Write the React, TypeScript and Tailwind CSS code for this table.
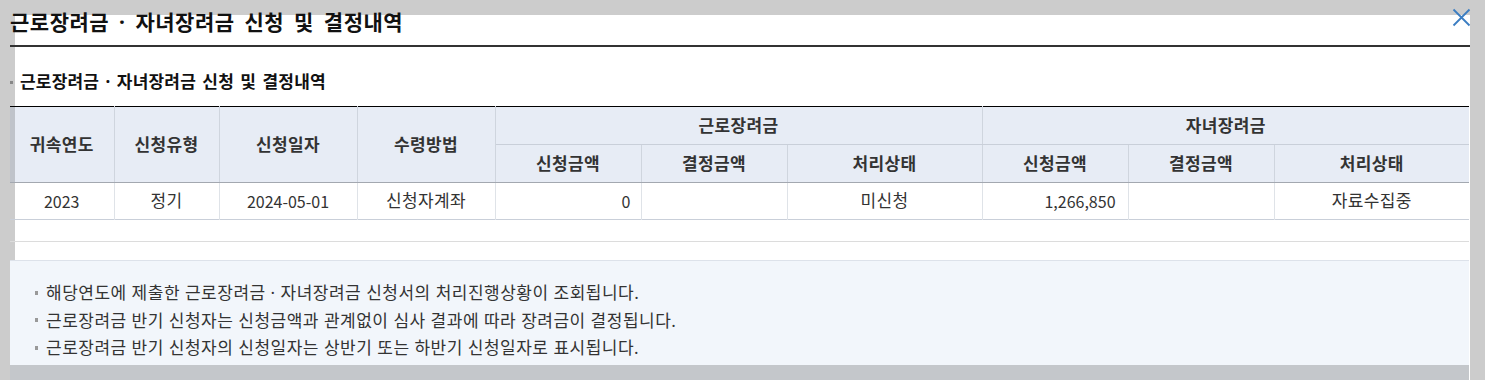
import React from 'react';

const groupCols = ['신청금액', '결정금액', '처리상태'];

// numbers sit a touch narrower than the hangul text in the reference
const num = "font-['Noto_Sans_CJK_KR',sans-serif] text-[16px] tracking-normal";

export default function App() {
  return (
    <div className="relative w-[1485px] h-[380px] overflow-hidden bg-[#cccccc] font-['Noto_Sans','Noto_Sans_CJK_KR',sans-serif] text-[#333]">
      <div className="ml-[10px] w-[1460px] flex flex-col bg-[linear-gradient(to_right,#cccccc_5px,#ffffff_5px)]">
        {/* Title */}
        <div className="h-[47px] border-b-2 border-[#333] bg-[linear-gradient(#cccccc_15px,transparent_15px)]">
          <h1 className="pt-[11px] text-[21px] leading-[22px] font-bold text-[#111] tracking-[0.5px] [word-spacing:4px]">
            근로장려금 · 자녀장려금 신청 및 결정내역
          </h1>
        </div>

        {/* Sub title */}
        <div className="mt-[27px] flex items-center h-[16px]">
          <span className="w-[3px] h-[3px] bg-[#888]" />
          <h2 className="ml-[7px] text-[17px] leading-[16px] font-bold text-[#111] tracking-[0.2px] [word-spacing:1.7px]">
            근로장려금 · 자녀장려금 신청 및 결정내역
          </h2>
        </div>

        {/* Table */}
        <table className="mt-[16px] w-[1459px] table-fixed border-collapse border-t border-black text-[17px] tracking-[0.4px]">
          <colgroup>
            <col className="w-[104px]" />
            <col className="w-[105px]" />
            <col className="w-[138px]" />
            <col className="w-[138px]" />
            <col className="w-[146px]" />
            <col className="w-[146px]" />
            <col className="w-[195px]" />
            <col className="w-[146px]" />
            <col className="w-[146px]" />
            <col className="w-[195px]" />
          </colgroup>
          <thead className="text-[#333]">
            <tr className="h-[38px]">
              <th rowSpan={2} className="font-semibold bg-[linear-gradient(to_right,#bfc3ca_5px,#e7ecf5_5px)] border-b border-[#a3a8b0] border-r border-r-[#cfd5de]">
                귀속연도
              </th>
              <th rowSpan={2} className="font-semibold bg-[#e7ecf5] border-b border-[#a3a8b0] border-r border-r-[#cfd5de]">
                신청유형
              </th>
              <th rowSpan={2} className="font-semibold bg-[#e7ecf5] border-b border-[#a3a8b0] border-r border-r-[#cfd5de]">
                신청일자
              </th>
              <th rowSpan={2} className="font-semibold bg-[#e7ecf5] border-b border-[#a3a8b0] border-r border-r-[#cfd5de]">
                수령방법
              </th>
              <th colSpan={3} className="font-semibold bg-[#e7ecf5] border-b border-[#c9cfd9] border-r border-r-[#cfd5de]">
                근로장려금
              </th>
              <th colSpan={3} className="font-semibold bg-[#e7ecf5] border-b border-[#c9cfd9]">
                자녀장려금
              </th>
            </tr>
            <tr className="h-[38px]">
              {[...groupCols, ...groupCols].map((c, i) => (
                <th
                  key={i}
                  className={`font-semibold bg-[#e7ecf5] border-b border-[#a3a8b0] ${i < 5 ? 'border-r border-r-[#cfd5de]' : ''}`}
                >
                  {c}
                </th>
              ))}
            </tr>
          </thead>
          <tbody>
            <tr className="h-[37px] border-b border-[#c9cfd9]">
              <td className={`text-center bg-[linear-gradient(to_right,#cccccc_5px,#ffffff_5px)] border-r border-[#dfe3e8] ${num}`}>2023</td>
              <td className="text-center bg-white border-r border-[#dfe3e8]">정기</td>
              <td className={`text-center bg-white border-r border-[#dfe3e8] ${num}`}>2024-05-01</td>
              <td className="text-center bg-white border-r border-[#dfe3e8]">신청자계좌</td>
              <td className={`text-right pr-[10px] bg-white border-r border-[#dfe3e8] ${num}`}>0</td>
              <td className="bg-white border-r border-[#dfe3e8]"></td>
              <td className="text-center bg-white border-r border-[#dfe3e8]">미신청</td>
              <td className={`text-right pr-[12px] bg-white border-r border-[#dfe3e8] ${num}`}>1,266,850</td>
              <td className="bg-white border-r border-[#dfe3e8]"></td>
              <td className="text-center bg-white">자료수집중</td>
            </tr>
          </tbody>
        </table>

        <div className="mt-[21px] w-[1459px] border-t border-[#dcdcdc]" />

        {/* Notice */}
        <div className="mt-[18px] w-[1459px] h-[105px] bg-[#f2f6fb] border-t border-[#dde2ea] pt-[18px] pl-[25px] text-[17px] leading-[27.5px] tracking-[0.5px] text-[#333]">
          {[
            '해당연도에 제출한 근로장려금 · 자녀장려금 신청서의 처리진행상황이 조회됩니다.',
            '근로장려금 반기 신청자는 신청금액과 관계없이 심사 결과에 따라 장려금이 결정됩니다.',
            '근로장려금 반기 신청자의 신청일자는 상반기 또는 하반기 신청일자로 표시됩니다.',
          ].map((t) => (
            <div key={t} className="flex items-center">
              <span className="w-[3px] h-[4px] bg-[#999] mr-[8px]" />
              <span>{t}</span>
            </div>
          ))}
        </div>

        <div className="w-[1459px] h-[20px] bg-[#c4c7cb]" />
      </div>

      {/* Close button */}
      <button className="absolute left-[1452px] top-[8px] w-[19px] h-[19px] text-[#3b7dc2]">
        <svg viewBox="0 0 19 19" width="19" height="19" fill="none" stroke="currentColor" strokeWidth="1.8">
          <path d="M1.5 1.5 L17.5 17.5 M17.5 1.5 L1.5 17.5" />
        </svg>
      </button>
    </div>
  );
}
